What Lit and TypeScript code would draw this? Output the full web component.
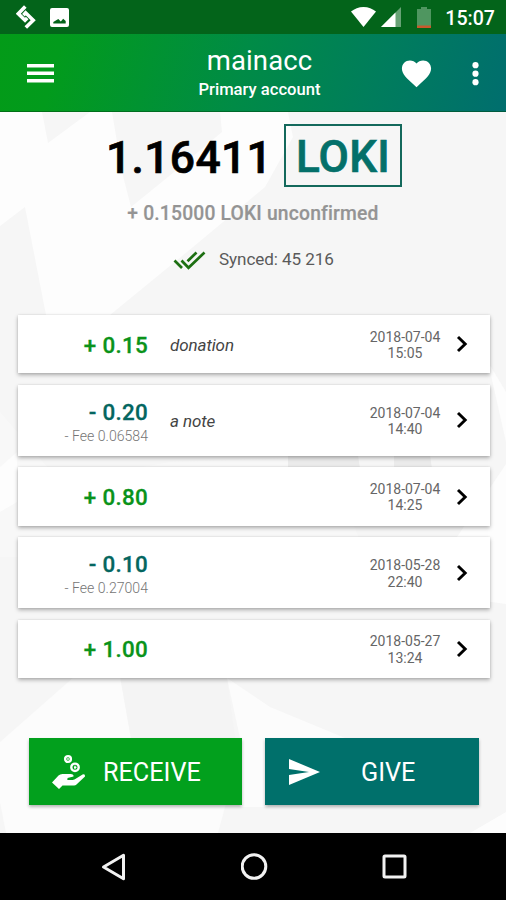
import { LitElement, html, css, svg, nothing } from "lit";
import { customElement, property } from "lit/decorators.js";
import { classMap } from "lit/directives/class-map.js";

interface Tx {
  amount: string;
  fee?: string;
  note?: string;
  date: string;
  time: string;
}

const TRANSACTIONS: Tx[] = [
  { amount: "+ 0.15", note: "donation", date: "2018-07-04", time: "15:05" },
  { amount: "- 0.20", fee: "- Fee 0.06584", note: "a note", date: "2018-07-04", time: "14:40" },
  { amount: "+ 0.80", date: "2018-07-04", time: "14:25" },
  { amount: "- 0.10", fee: "- Fee 0.27004", date: "2018-05-28", time: "22:40" },
  { amount: "+ 1.00", date: "2018-05-27", time: "13:24" },
];

const icon = (w: number, h: number, body: unknown, box = `0 0 ${w} ${h}`) =>
  html`<svg width=${w} height=${h} viewBox=${box} aria-hidden="true">${body}</svg>`;

@customElement("status-bar")
class StatusBar extends LitElement {
  static styles = css`
    :host {
      display: flex;
      align-items: center;
      height: 34px;
      padding: 0 11px 0 16px;
      background: #03641a;
      color: #fff;
    }
    svg { display: block; flex: none; }
    .picture { margin-left: 14px; }
    .wifi { margin-left: auto; }
    .signal { margin-left: 5px; }
    .battery { margin-left: 16px; }
    .clock {
      margin-left: 14px;
      padding-top: 3px;
      font-size: 19.6px;
      font-weight: 500;
      line-height: 22px;
    }
  `;
  render() {
    return html`
      ${icon(20, 24, svg`
        <g fill="none" stroke="#fff" stroke-width="3.6">
          <path d="M9.3 1.6 2.3 8.8 9 15.3 11.2 13"/>
          <path d="M9.8 22.6 17.2 15.2 9.6 7.8 7.4 10.2"/>
        </g>`)}
      <span class="picture">${icon(19, 19, svg`
        <path fill="#fff" fill-rule="evenodd" d="M2 0H17a2 2 0 0 1 2 2V17a2 2 0 0 1-2 2H2a2 2 0 0 1-2-2V2A2 2 0 0 1 2 0ZM3.300 15.600H15.700V13L13.200 10.800 10.800 13.500 8.300 11 3.300 14Z"/>`)}</span>
      <span class="wifi">${icon(25, 20, svg`
        <path fill="#fff" d="M12.500 20 0 4.600C3.500 1.700 7.700 0 12.500 0S21.500 1.700 25 4.600Z"/>`)}</span>
      <span class="signal">${icon(20, 20, svg`
        <path fill="#fff" opacity=".4" d="M0 20 20 0V20Z"/>
        <path fill="#fff" d="M0 20 14.500 5.500V20Z"/>`)}</span>
      <span class="battery">${icon(14, 21, svg`
        <path fill="#4f9660" d="M4 0H10V2H14V21H0V2H4Z"/>
        <path fill="#c75a2c" d="M0 18.500H14V21H0Z"/>`)}</span>
      <span class="clock">15:07</span>
    `;
  }
}

@customElement("app-header")
class AppHeader extends LitElement {
  static styles = css`
    :host {
      display: grid;
      grid-template-columns: 120px 1fr 120px;
      height: 78px;
      box-sizing: border-box;
      background: linear-gradient(105deg, #039b18 0%, #029b1c 12%, #008b46 48%, #007d5c 74%, #006e6e 100%);
      color: #fff;
      border-bottom: 1px solid rgba(0, 70, 20, 0.5);
    }
    svg { display: block; }
    .menu { padding: 30px 0 0 26.500px; }
    .titles { text-align: center; padding-top: 10px; margin: 0 -13px 0 0; }
    .name { font-size: 27.500px; line-height: 34px; letter-spacing: 0.1px; }
    .kind { font-size: 16.6px; line-height: 22px; padding-top: 1px; font-weight: 500; letter-spacing: 0; }
    .actions { display: flex; padding: 22px 0 0 13px; gap: 20px; }
    .dots { padding-top: 6px; margin-left: 18px; }
  `;
  render() {
    return html`
      <div class="menu">${icon(27, 19, svg`
        <path fill="#fff" d="M0 0H27V3.600H0ZM0 7.500H27V11.100H0ZM0 15H27V18.600H0Z"/>`)}</div>
      <div class="titles">
        <div class="name">mainacc</div>
        <div class="kind">Primary account</div>
      </div>
      <div class="actions">
        ${icon(35, 35, svg`<path fill="#fff" d="M12 21.350l-1.450-1.320C5.400 15.360 2 12.280 2 8.500 2 5.420 4.420 3 7.500 3c1.740 0 3.410.810 4.500 2.090C13.090 3.810 14.760 3 16.500 3 19.580 3 22 5.420 22 8.500c0 3.780-3.400 6.860-8.550 11.540L12 21.350z"/>`, "0 0 24 24")}
        <span class="dots">${icon(7, 24, svg`
          <g fill="#fff"><circle cx="3.500" cy="3.200" r="3.100"/><circle cx="3.500" cy="11.700" r="3.100"/><circle cx="3.500" cy="20.200" r="3.100"/></g>`)}</span>
      </div>
    `;
  }
}

@customElement("tx-card")
class TxCard extends LitElement {
  @property({ attribute: false }) tx!: Tx;
  static styles = css`
    :host {
      display: grid;
      grid-template-columns: 130.500px 1fr 90px 40px;
      align-items: center;
      height: 58.400px;
      background: #fff;
      box-shadow: 0 2px 4px rgba(0, 0, 0, 0.3), 0 0 2px rgba(0, 0, 0, 0.1);
    }
    :host(.tall) { height: 71.400px; }
    .sum { text-align: right; }
    .amount { font-size: 22.400px; line-height: 26px; font-weight: 500; letter-spacing: 0.300px; color: #0a931a; padding-top: 1px; -webkit-text-stroke: 0.300px currentColor; }
    .amount.out { color: #04665f; padding-top: 3px; }
    .fee { font-size: 14.100px; line-height: 18px; color: #757575; padding-top: 2px; font-weight: 300; }
    .note { padding-left: 22px; font-size: 17px; font-style: italic; color: #444; letter-spacing: -0.1px; padding-top: 1px; }
    .when { text-align: center; font-size: 14px; line-height: 16.300px; color: #666; padding-top: 1.500px; }
    .chev { padding-left: 6px; }
    svg { display: block; }
  `;
  render() {
    const { amount, fee, note, date, time } = this.tx;
    return html`
      <div class="sum">
        <div class=${classMap({ amount: true, out: amount.startsWith("-") })}>${amount}</div>
        ${fee ? html`<div class="fee">${fee}</div>` : nothing}
      </div>
      <div class="note">${note ?? nothing}</div>
      <div class="when">${date}<br />${time}</div>
      <div class="chev">${icon(12, 18, svg`<path fill="none" stroke="#000" stroke-width="2.900" d="M2 2 9.200 9 2 16"/>`)}</div>
    `;
  }
}

@customElement("app-root")
class AppRoot extends LitElement {
  static styles = css`
    :host {
      display: flex;
      flex-direction: column;
      width: 506px;
      height: 900px;
      overflow: hidden;
      font-family: Roboto, "Liberation Sans", sans-serif;
    }
    svg { display: block; flex: none; }
    status-bar, app-header, nav { flex: none; }
    main {
      position: relative;
      flex: 1;
      display: flex;
      flex-direction: column;
      background: #f6f6f6;
      overflow: hidden;
    }
    .backdrop { position: absolute; inset: 0; }
    .content { position: relative; display: flex; flex-direction: column; }
    .balance {
      display: flex;
      align-items: center;
      padding: 12px 0 0 106px;
      height: 63px;
    }
    .value { font-size: 44.500px; line-height: 52px; font-weight: 500; color: #000; width: 178px; padding-top: 5px; letter-spacing: 0.300px; -webkit-text-stroke: 0.700px #000; }
    .unit {
      box-sizing: border-box;
      width: 118px;
      height: 63px;
      border: 2px solid #14695c;
      color: #04706a;
      font-size: 44px;
      font-weight: 500;
      -webkit-text-stroke: 0.700px #04706a;
      line-height: 62px;
      text-align: center;
      letter-spacing: 0.300px;
    }
    .pending { text-align: center; font-size: 19.300px; line-height: 24px; font-weight: 500; color: #949494; padding-top: 15px; letter-spacing: 0.180px; -webkit-text-stroke: 0.200px currentColor; }
    .sync {
      display: flex;
      align-items: center;
      padding: 21px 0 0 173px;
      gap: 13px;
      font-size: 17.100px;
      letter-spacing: -0.080px;
      line-height: 24px;
      color: #5a5a5a;
    }
    .sync svg { margin-top: 3px; }
    .list { display: flex; flex-direction: column; gap: 11.300px; margin: 44px 16px 0 17.500px; }
    .buttons { display: flex; gap: 23px; padding: 60px 0 0 28.500px; }
    .btn {
      display: flex;
      align-items: center;
      box-sizing: border-box;
      width: 213.500px;
      height: 67px;
      color: #fff;
      font-size: 25.200px;
      box-shadow: 0 2px 3px rgba(0, 0, 0, 0.28);
    }
    .receive { background: #02a01d; padding-left: 23px; }
    .give { background: #00706b; padding-left: 24px; }
    .receive span { padding: 2px 0 0 17.500px; }
    .give span { padding: 2px 0 0 41px; }
    nav {
      display: flex;
      align-items: center;
      height: 67px;
      padding-left: 101px;
      background: #000;
    }
    .home { margin-left: 114.500px; }
    .recent { margin-left: 114px; }
  `;

  private backdrop() {
    return svg`
      <g fill="#fdfdfd">
        <path d="M0 0H42L48 31 90 0H112L122 60 131 95 168 65 222 20 220 0H288L293 25 265 75 193 135 110 203H46L25 95 0 114Z"/>
        <path d="M488 250 506 330V280Z"/>
        <path d="M0 300 60 370 170 350 330 345 360 430 284 445H0Z" fill="#f8f8f8"/>
        <path d="M0 355 17 340V390L0 400Z"/>
        <path d="M506 352 420 480 506 492Z"/>
        <path d="M0 630 75 564H120L132 632H242L218 721H6L0 690Z" fill="#fcfcfc"/>
        <path d="M227 566 240 626H345L270 595Z" fill="#fcfcfc"/>
        <path d="M240 625H268V695H240Z" fill="#fcfcfc"/>
        <path d="M506 700V721H470Z"/>
      </g>
      <g fill="#f0f0f0">
        <path d="M120 564 132 632H236L227 566Z" fill="#f4f4f4"/>
        <path d="M288 343H358L360 357H288ZM394 343H430L432 357H394Z" fill="#ebebeb"/>
      </g>`;
  }

  render() {
    return html`
      <status-bar></status-bar>
      <app-header></app-header>
      <main>
        <div class="backdrop">${icon(506, 721, this.backdrop())}</div>
        <div class="content">
          <div class="balance"><div class="value">1.16411</div><div class="unit">LOKI</div></div>
          <div class="pending">+ 0.15000 LOKI unconfirmed</div>
          <div class="sync">
            ${icon(33, 20, svg`<path fill="none" stroke="#1d6f12" stroke-width="2.700" d="M1.500 9.500 9 17M8.500 9.500 15.500 16.800 31.500 1.500M14.500 10.200 23.500 1.500"/>`)}
            <span>Synced: 45 216</span>
          </div>
          <div class="list">
            ${TRANSACTIONS.map((tx) => html`<tx-card class=${classMap({ tall: !!tx.fee })} .tx=${tx}></tx-card>`)}
          </div>
          <div class="buttons">
            <div class="btn receive">
              ${icon(34, 36, svg`
                <path fill="#fff" d="M0 28.500 6.500 21.500Q8 20 10.500 20H18.500Q22 20.300 21.500 22.500L15.500 24V25.500H22.500L31 20.200Q33.500 20 33 22.500L24.500 30.500Q23.500 31.500 22 31.500H10.500L7 35Z"/>
                <path fill="none" stroke="#02a01d" stroke-width="1" d="M15.500 25.500H21.500"/>
                <g fill="none" stroke="#fff" stroke-width="2.400"><circle cx="16" cy="5" r="2.900"/><circle cx="23" cy="13.300" r="3.700"/></g>
                <path fill="none" stroke="#fff" stroke-width="1.300" d="M16 4V6M23 11.700V15M22 13.300H24.500"/>`)}
              <span>RECEIVE</span>
            </div>
            <div class="btn give">
              ${icon(31, 26, svg`<path fill="#fff" d="M0 0 31 13 0 26V16L20 13 0 10Z"/>`)}
              <span>GIVE</span>
            </div>
          </div>
        </div>
      </main>
      <nav>
        ${icon(25, 28, svg`<path fill="none" stroke="#f2f2f2" stroke-width="3" stroke-linejoin="round" d="M22.500 2.300V25.700L2.500 14Z"/>`)}
        <span class="home">${icon(27, 27, svg`<circle cx="13" cy="13.500" r="11.800" fill="none" stroke="#f2f2f2" stroke-width="3"/>`)}</span>
        <span class="recent">${icon(25, 25, svg`<rect x="2" y="2" width="21" height="21" rx="1" fill="none" stroke="#f2f2f2" stroke-width="3"/>`)}</span>
      </nav>
    `;
  }
}
